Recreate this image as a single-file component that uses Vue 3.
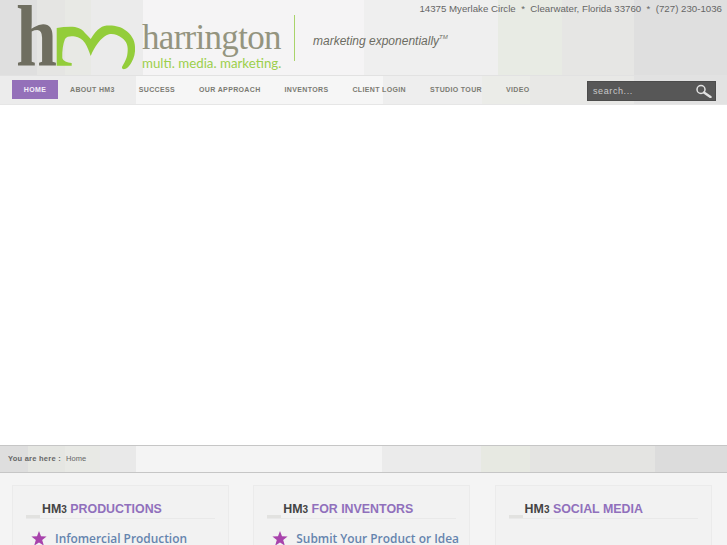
<script setup>
const navItems = ['Home', 'About HM3', 'Success', 'Our Approach', 'Inventors', 'Client Login', 'Studio Tour', 'Video']
const panels = [
  { accent: 'PRODUCTIONS', link: 'Infomercial Production' },
  { accent: 'FOR INVENTORS', link: 'Submit Your Product or Idea' },
  { accent: 'SOCIAL MEDIA', link: '' }
]
</script>

<template>
  <div class="page">
    <header class="top">
      <div class="brand">
        <svg class="mark" width="125" height="72" viewBox="0 0 125 72" aria-label="hm logo">
          <path class="mark-m" d="M40.7 28 C47 27 53 26.5 59 27 C64 28 67 30 69 33 C71 35 73 37 74.7 39 C79 32 84 26 90.7 25.5 C98 25 105 26.5 109 30 C115 34 119 40 119 47 C119.5 53 118 58 115.7 62 C114 65 112 68 109 69 C107 69.5 105.5 68.5 106 67 C108 63 111 59 111.5 53 C112.5 46 110.5 41 106 38 C102 35 98 33.5 94 34 C89 35 85 39 82 43 C79 47 76.5 51 74.7 56 C73 51 71.5 47 69 43 C66 39 63 37 59 36.5 C55 36 51 36 49 39 C47 44 46 51 46.3 58 C47 61 51 62.5 55.7 63 L55.7 65.7 L40.7 65.7 Z"/>
          <text x="0" y="65" class="mark-h" textLength="41" lengthAdjust="spacingAndGlyphs">h</text>
        </svg>
        <div class="wordmark">
          <div class="name">harrington</div>
          <div class="sub">multi. media. marketing.</div>
        </div>
        <div class="divider"></div>
        <div class="tagline">marketing exponentially<sup>TM</sup></div>
      </div>
      <div class="address">14375 Myerlake Circle&nbsp; * &nbsp;Clearwater, Florida 33760&nbsp; * &nbsp;(727) 230-1036</div>
    </header>

    <nav class="nav">
      <ul class="menu">
        <li v-for="(item, i) in navItems" :key="item" :class="{ active: i === 0 }">{{ item }}</li>
      </ul>
      <div class="search">
        <span>search...</span>
        <svg width="18" height="14" viewBox="0 0 18 14">
          <circle cx="6" cy="5.5" r="4" fill="none" stroke="#e2e2e2" stroke-width="1.5"/>
          <path d="M9 8.5 L15.5 13" stroke="#e2e2e2" stroke-width="2.4" stroke-linecap="round"/>
        </svg>
      </div>
    </nav>

    <main class="main"></main>

    <div class="crumbs">
      <b>You are here :</b><span>Home</span>
    </div>

    <section class="panels">
      <article v-for="p in panels" :key="p.accent" class="panel">
        <h3><span class="hm">HM<small>3</small></span> {{ p.accent }}</h3>
        <div v-if="p.link" class="link">
          <svg width="16" height="15" viewBox="0 0 16 15">
            <path d="M8 0 L10 5.3 L15.6 5.5 L11.2 9 L12.8 14.6 L8 11.4 L3.2 14.6 L4.8 9 L0.4 5.5 L6 5.3 Z" fill="#a843ac"/>
          </svg>
          <span>{{ p.link }}</span>
        </div>
      </article>
    </section>
  </div>
</template>

<style>
html, body { margin: 0; background: #fff; overflow: hidden; }
</style>

<style scoped>
.page {
  width: 727px;
  height: 545px;
  overflow: hidden;
  font-family: "Liberation Sans", Arial, sans-serif;
  background: #fff;
}
.top {
  height: 75px;
  position: relative;
  background: linear-gradient(90deg,
    #dfdfdf 0 37px, #e5e5e3 37px 65px, #e8e9e5 65px 91px, #ebebeb 91px 143px,
    #f5f4f5 143px 364px, #efefef 364px 498px, #e8ebe4 498px 562px,
    #e6e6e4 562px 634px, #dfdfdf 634px);
  border-bottom: 1px solid #e2e2e2;
}
.brand {
  display: flex;
  align-items: flex-start;
  padding-left: 16px;
}
.mark { flex: none; }
.mark-h {
  font-family: "Liberation Serif", serif;
  font-weight: 700;
  font-size: 86px;
  fill: #6f6e60;
}
.mark-m { fill: #93cd3a; }
.wordmark { margin-left: 1px; width: 145px; }
.name {
  margin-top: 20px;
  font-family: "Liberation Serif", serif;
  font-size: 35px;
  line-height: 36px;
  letter-spacing: -0.7px;
  color: #94947f;
}
.sub {
  font-family: Lato, sans-serif;
  font-size: 13.3px;
  line-height: 14px;
  color: #9ccf4c;
  white-space: nowrap;
}
.divider {
  width: 1px;
  height: 46px;
  margin: 15px 0 0 7px;
  background: #a9d46a;
}
.tagline {
  margin: 34px 0 0 18px;
  font-size: 12px;
  font-style: italic;
  line-height: 15px;
  color: #6c6c62;
  white-space: nowrap;
}
.tagline sup { font-size: 6px; line-height: 0; vertical-align: 6px; }
.address {
  position: absolute;
  top: 2px;
  right: 5px;
  font-size: 9.7px;
  line-height: 13px;
  color: #666;
  white-space: pre;
}
.nav {
  height: 29px;
  display: flex;
  align-items: flex-start;
  justify-content: space-between;
  box-sizing: border-box;
  padding: 4px 11px 0 12px;
  border-bottom: 1px solid #e6e6e6;
  background: linear-gradient(90deg,
    #ececec 0 136px, #f6f6f6 136px 383px, #eeeeee 383px 482px, #ebece8 482px 530px,
    #e8e8e6 530px 634px, #e2e2e2 634px);
}
.menu {
  display: flex;
  list-style: none;
  margin: 0;
  padding: 0;
}
.menu li {
  box-sizing: border-box;
  height: 19px;
  padding: 0 12px;
  font-size: 7px;
  font-weight: 700;
  line-height: 19px;
  letter-spacing: 0.35px;
  text-transform: uppercase;
  color: #7b7b73;
  white-space: nowrap;
}
.menu li.active {
  width: 46px;
  padding: 0;
  text-align: center;
  color: #f3eef8;
  background: #9470b9;
}
.search {
  width: 129px;
  height: 20px;
  box-sizing: border-box;
  margin-top: 1px;
  padding: 0 2px 0 5px;
  display: flex;
  align-items: center;
  justify-content: space-between;
  background: #575757;
  border: 1px solid #4c4c4c;
  font-size: 9px;
  letter-spacing: 0.6px;
  color: #c9c9c9;
}
.main { height: 340px; background: #fff; }
.crumbs {
  height: 28px;
  box-sizing: border-box;
  display: flex;
  align-items: center;
  gap: 5px;
  padding: 0 0 2px 8px;
  border-top: 1px solid #c6c6c6;
  border-bottom: 1px solid #c6c6c6;
  font-size: 7.5px;
  color: #666;
  background: linear-gradient(90deg,
    #dedede 0 28px, #e5e6e2 28px 65px, #e8e9e5 65px 100px, #e9e9e9 100px 136px,
    #f4f4f4 136px 382px, #ebebeb 382px 481px, #e7e9e2 481px 530px,
    #e4e4e2 530px 655px, #dcdcdc 655px);
}
.crumbs b { letter-spacing: 0.25px; }
.crumbs span { letter-spacing: 0.1px; }
.panels {
  height: 73px;
  box-sizing: border-box;
  display: flex;
  gap: 24.3px;
  padding: 12px 0 0 12px;
  background: #f4f4f4;
}
.panel {
  width: 217px;
  height: 100px;
  flex: none;
  box-sizing: border-box;
  padding: 15px 13px 0;
  background: #f2f2f2;
  border: 1px solid #ebebeb;
}
.panel h3 {
  position: relative;
  margin: 0;
  height: 17px;
  padding-left: 16px;
  border-bottom: 1px solid #e9e9e9;
  font-size: 12.4px;
  font-weight: 700;
  line-height: 16px;
  color: #9070bc;
}
.panel h3::before {
  content: "";
  position: absolute;
  left: 0;
  bottom: 0;
  width: 14px;
  height: 3px;
  background: #e2e2e0;
}
.hm { color: #444; }
.hm small { font-size: 10px; }
.link {
  display: flex;
  align-items: center;
  gap: 8px;
  margin: 10px 0 0 5px;
  font-family: "Open Sans", sans-serif;
  font-size: 11.9px;
  font-weight: 600;
  line-height: 16px;
  color: #6584ae;
  white-space: nowrap;
}
.link svg { flex: none; margin-top: 2px; }
</style>
